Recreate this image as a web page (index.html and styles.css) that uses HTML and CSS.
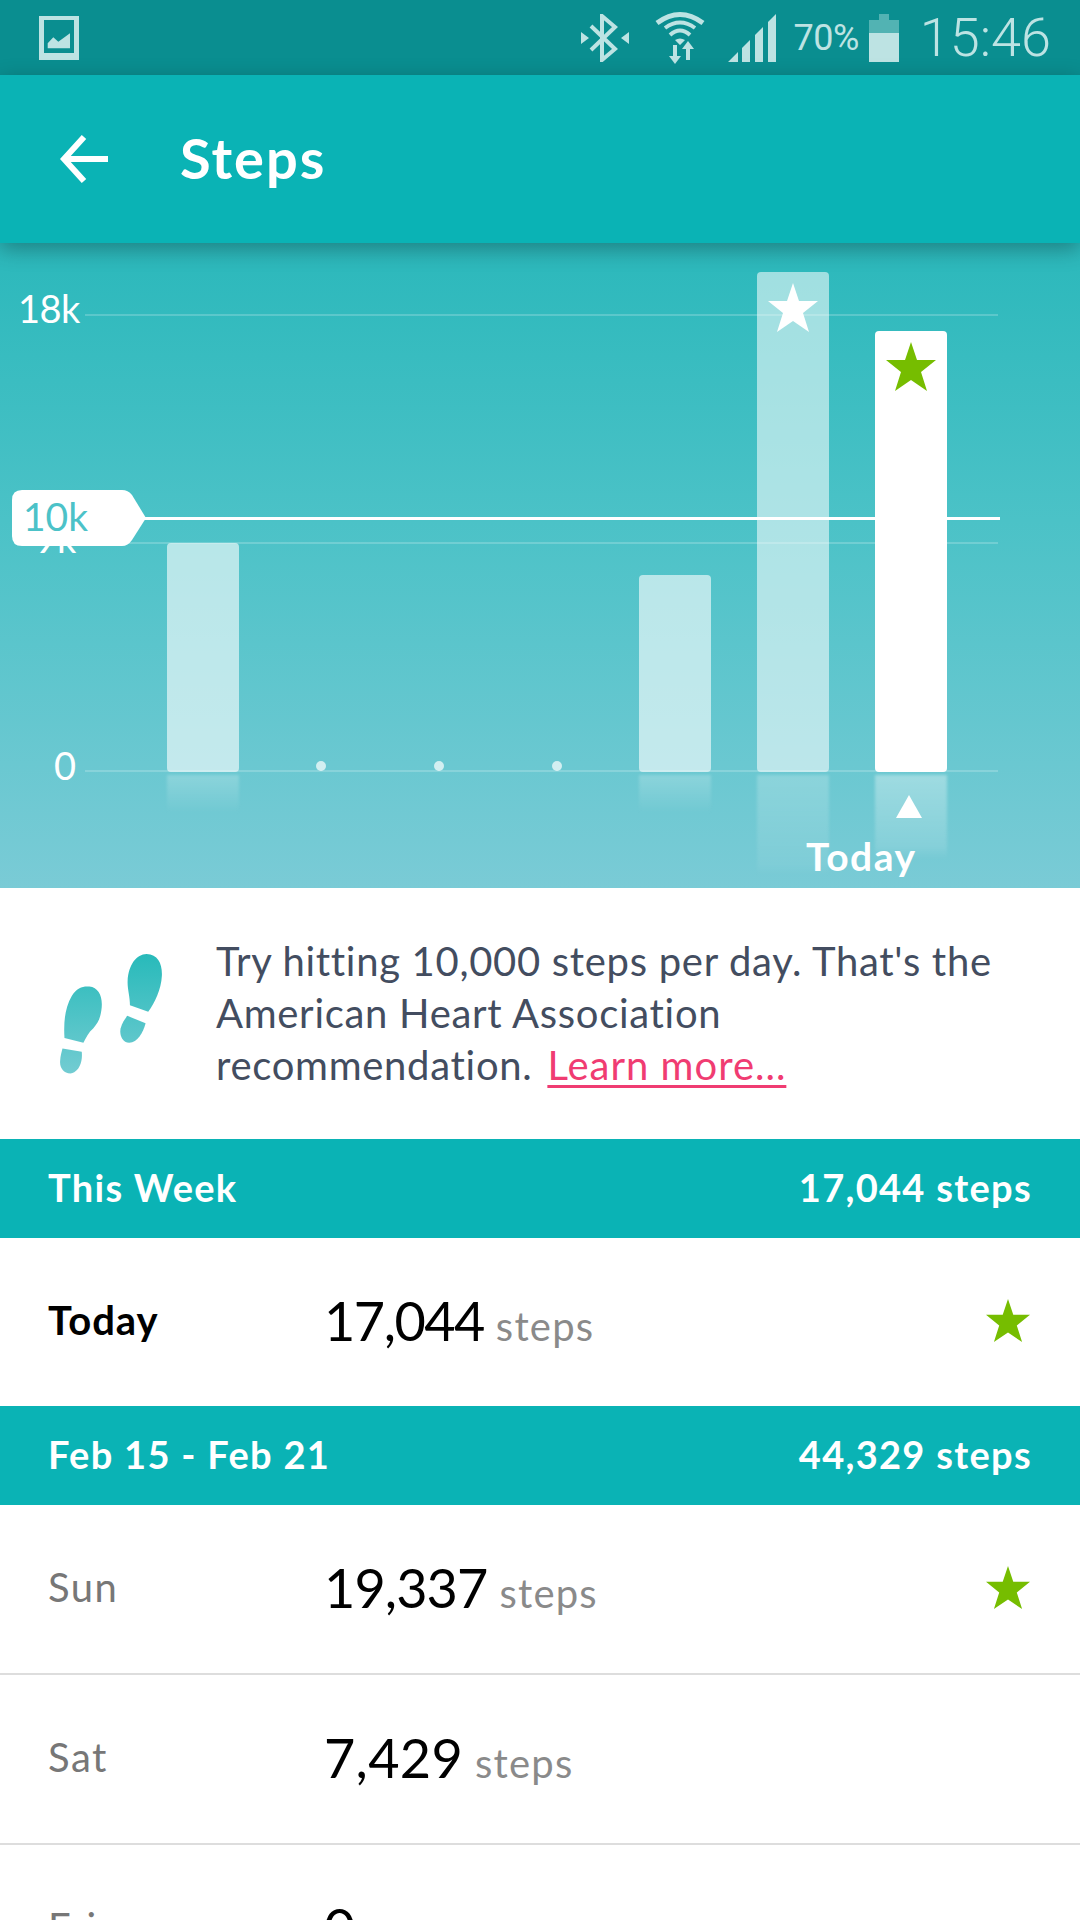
FILE: index.html
```html
<!DOCTYPE html>
<html lang="en">
  <head>
    <meta charset="UTF-8" />
    <meta name="viewport" content="width=device-width, initial-scale=1.0" />
    <title>Steps</title>
    <link rel="stylesheet" href="styles.css">
  </head>
  <body>
    <!-- Status bar -->
    <div class="status-bar">
      <svg class="status-gallery" width="40" height="44" viewBox="0 0 40 44">
        <path fill="#bde3e3" d="M0 0H40V44H0Z"/>
        <path fill="#0a8e90" d="M5 4H35V37H5Z"/>
        <path fill="#bde3e3" d="M8.7 32.3V27.3L14.3 21.3L19.3 25.7L31 17.3V32.3Z"/>
      </svg>
      <div class="status-right">
        <svg class="status-bt" width="48" height="48" viewBox="0 0 48 48">
          <path fill="none" stroke="#bde3e3" stroke-width="4" d="M10 12L34 35L21 46V2L34 13L10 36"/>
          <path fill="#bde3e3" d="M0 18L8 24L0 30ZM48 18L40 24L48 30Z"/>
        </svg>
        <svg class="status-wifi" width="50" height="53" viewBox="0 0 50 53">
          <g fill="none" stroke="#bde3e3">
            <path stroke-width="5" d="M2 12Q25 -5 48 12"/>
            <path stroke-width="4" d="M10 17Q25 6 40 17"/>
            <path stroke-width="4" d="M15 24Q25 15 35 24"/>
          </g>
          <path fill="#bde3e3" d="M20 29Q25 26 30 29L25 34ZM18 34H22V45H26L20 53L14 45H18ZM33 30L39 38H35V49H31V38H27Z"/>
        </svg>
        <svg class="status-signal" width="48" height="48" viewBox="0 0 48 48">
          <path fill="#bde3e3" d="M0 48L10 38V48ZM14 48V34L22 26V48ZM27 48V21L35 13V48ZM40 48V8L48 0V48Z"/>
        </svg>
        <span class="status-pct">70%</span>
        <svg class="status-battery" width="30" height="48" viewBox="0 0 30 48">
          <path fill="#52b3b3" d="M10 0H20V6H30V19H0V6H10Z"/>
          <path fill="#bde3e3" d="M0 19H30V48H0Z"/>
        </svg>
        <span class="status-time">15:46</span>
      </div>
    </div>

    <!-- App bar -->
    <header class="app-bar">
      <svg class="back-icon" width="48" height="48" viewBox="0 0 48 48">
        <path fill="none" stroke="#fff" stroke-width="6" d="M48 24H4M24 2L4 24L24 46"/>
      </svg>
      <h1 class="app-title">Steps</h1>
    </header>

    <!-- Chart -->
    <section class="chart">
      <div class="grid-line grid-18"></div>
      <div class="grid-line grid-9"></div>
      <div class="grid-line grid-0"></div>
      <span class="axis-label label-18">18k</span>
      <span class="axis-label label-9">9k</span>
      <span class="axis-label label-0">0</span>

      <div class="bars">
        <div class="col"><div class="bar bar-low" style="height: 229px"></div></div>
        <div class="col"><div class="dot"></div></div>
        <div class="col"><div class="dot"></div></div>
        <div class="col"><div class="dot"></div></div>
        <div class="col"><div class="bar bar-low" style="height: 197px"></div></div>
        <div class="col">
          <div class="bar bar-high" style="height: 500px">
            <svg class="bar-star" width="50" height="50" viewBox="0 0 50 50"><path fill="#fff" d="M25 0L31 18H50L35 30L41 49L25 38L9 49L15 30L0 18H19Z"/></svg>
          </div>
        </div>
        <div class="col">
          <div class="bar bar-today" style="height: 441px">
            <svg class="bar-star" width="50" height="50" viewBox="0 0 50 50"><path fill="#76bd00" d="M25 0L31 18H50L35 30L41 49L25 38L9 49L15 30L0 18H19Z"/></svg>
          </div>
        </div>
      </div>

      <div class="goal-line"></div>
      <svg class="goal-tag" width="134" height="56" viewBox="0 0 134 56">
        <path fill="#fff" d="M10 0H110Q116 0 120 5L134 28L120 50Q116 56 110 56H10Q0 56 0 46V10Q0 0 10 0Z"/>
      </svg>
      <span class="goal-label">10k</span>

      <div class="today-arrow"></div>
      <span class="today-label">Today</span>
    </section>

    <!-- Tip -->
    <section class="tip">
      <svg class="tip-icon" width="102" height="120" viewBox="90 99 306 361">
        <defs>
          <linearGradient id="foot" gradientUnits="userSpaceOnUse" x1="0" y1="100" x2="0" y2="460">
            <stop offset="0" stop-color="#28baba"/>
            <stop offset="1" stop-color="#73ccd2"/>
          </linearGradient>
        </defs>
        <g fill="url(#foot)">
          <path d="M103 352C100 300 105 260 125 225C140 200 160 195 178 197C205 200 218 225 215 260C212 290 205 305 190 322C175 335 168 350 160 366Z"/>
          <path d="M97 383L155 393C158 420 150 450 125 458C100 460 88 440 90 420C91 405 94 395 97 383Z"/>
          <path d="M300 253C300 225 292 205 293 180C296 130 320 100 350 99C385 100 398 130 396 165C394 205 375 245 355 273Z"/>
          <path d="M292 285L347 307C340 335 322 365 298 366C275 365 268 340 272 322C276 308 284 295 292 285Z"/>
        </g>
      </svg>
      <p class="tip-text">Try hitting 10,000 steps per day. That's the American Heart Association recommendation. <a class="tip-link" href="#">Learn more...</a></p>
    </section>

    <!-- Log -->
    <div class="band"><span>This Week</span><span>17,044 steps</span></div>
    <div class="row">
      <span class="row-day row-day-now">Today</span>
      <span class="row-main"><span class="row-value">17,044</span><span class="row-unit">steps</span></span>
      <svg class="row-star" width="44" height="44" viewBox="0 0 50 50"><path fill="#76bd00" d="M25 0L31 18H50L35 30L41 49L25 38L9 49L15 30L0 18H19Z"/></svg>
    </div>
    <div class="band"><span>Feb 15 - Feb 21</span><span>44,329 steps</span></div>
    <div class="row row-line">
      <span class="row-day">Sun</span>
      <span class="row-main"><span class="row-value row-value-sun">19,337</span><span class="row-unit">steps</span></span>
      <svg class="row-star" width="44" height="44" viewBox="0 0 50 50"><path fill="#76bd00" d="M25 0L31 18H50L35 30L41 49L25 38L9 49L15 30L0 18H19Z"/></svg>
    </div>
    <div class="row row-line">
      <span class="row-day">Sat</span>
      <span class="row-main"><span class="row-value row-value-sat">7,429</span><span class="row-unit">steps</span></span>
    </div>
    <div class="row">
      <span class="row-day">Fri</span>
      <span class="row-main"><span class="row-value">0</span><span class="row-unit">steps</span></span>
    </div>
  </body>
</html>
```

FILE: styles.css
```css
html,
body {
  margin: 0;
  padding: 0;
  height: 1920px;
  overflow: hidden;
}

body {
  font-family: 'Lato', 'Open Sans', sans-serif;
  background-color: #fff;
  color: #000;
}

.status-bar {
  display: flex;
  justify-content: space-between;
  align-items: center;
  height: 75px;
  padding: 0 29px 0 39px;
  background-color: #0a8e90;
  color: #bde3e3;
}

.status-right {
  display: flex;
  align-items: center;
}

.status-bt {
  margin-right: 26px;
}

.status-wifi {
  margin-right: 23px;
}

.status-signal {
  margin-right: 18px;
}

.status-pct {
  font-family: 'Roboto', sans-serif;
  font-size: 36px;
  letter-spacing: -0.5px;
  margin-right: 10px;
}

.status-battery {
  margin-right: 21px;
}

.status-time {
  font-family: 'Roboto', sans-serif;
  font-weight: 300;
  font-size: 54px;
}

.app-bar {
  position: relative;
  z-index: 2;
  display: flex;
  align-items: center;
  height: 168px;
  padding-left: 60px;
  background-color: #0ab3b5;
  box-shadow: 0 6px 20px rgba(0, 0, 0, 0.3);
}

.back-icon {
  margin-right: 72px;
}

.app-title {
  margin: 0 0 4px;
  color: #fff;
  font-size: 56px;
  font-weight: 700;
  letter-spacing: 2px;
}

.chart {
  position: relative;
  height: 645px;
  overflow: hidden;
  background: linear-gradient(#2bb8bb, #4bc2c7 43%, #7acbd6);
}

.grid-line {
  position: absolute;
  left: 85px;
  right: 82px;
  height: 2px;
  background-color: rgba(255, 255, 255, 0.2);
}

.grid-18 { top: 71px; }
.grid-9 { top: 299px; }
.grid-0 { top: 527px; }

.axis-label {
  position: absolute;
  color: #fff;
  font-size: 38px;
  line-height: 44px;
}

.label-18 { left: 18px; top: 43px; letter-spacing: -0.5px; }
.label-9 { left: 35px; top: 273px; }
.label-0 { left: 54px; top: 500px; }

.bars {
  position: absolute;
  left: 167px;
  bottom: 116px;
  display: flex;
  align-items: flex-end;
  gap: 46px;
}

.col {
  display: flex;
  justify-content: center;
  width: 72px;
}

.dot {
  width: 10px;
  height: 10px;
  margin-bottom: 1px;
  border-radius: 50%;
  background-color: rgba(255, 255, 255, 0.7);
}

.bar {
  position: relative;
  width: 100%;
  border-radius: 4px;
}

.bar-low { background-color: rgba(255, 255, 255, 0.6); }
.bar-high { background-color: rgba(255, 255, 255, 0.55); }
.bar-today { background-color: #fff; }

.bar::after {
  content: "";
  position: absolute;
  top: calc(100% + 3px);
  left: 0;
  right: 0;
  height: 38px;
  background: linear-gradient(rgba(255, 255, 255, 0.22), rgba(255, 255, 255, 0));
  filter: blur(1.5px);
}

.bar-high::after {
  height: 100px;
  background: linear-gradient(rgba(255, 255, 255, 0.22), rgba(255, 255, 255, 0.06) 90%, rgba(255, 255, 255, 0));
}

.bar-today::after {
  height: 84px;
  background: linear-gradient(rgba(255, 255, 255, 0.35), rgba(255, 255, 255, 0.12) 85%, rgba(255, 255, 255, 0));
}

.bar-star {
  position: absolute;
  top: 11px;
  left: 11px;
}

.goal-line {
  position: absolute;
  left: 140px;
  right: 80px;
  top: 274px;
  height: 3px;
  background-color: #fff;
}

.goal-tag {
  position: absolute;
  left: 12px;
  top: 247px;
}

.goal-label {
  position: absolute;
  left: 23px;
  top: 251px;
  color: #4cc2c8;
  font-size: 39px;
  line-height: 44px;
}

.today-arrow {
  position: absolute;
  left: 896px;
  top: 552px;
  width: 0;
  height: 0;
  border-left: 13px solid transparent;
  border-right: 13px solid transparent;
  border-bottom: 23px solid #fff;
}

.today-label {
  position: absolute;
  left: 806px;
  top: 590px;
  color: #fff;
  font-size: 39px;
  font-weight: 700;
  letter-spacing: 1.5px;
  line-height: 46px;
}

.tip {
  display: flex;
  align-items: center;
  height: 251px;
  padding-left: 60px;
  box-sizing: border-box;
}

.tip-icon {
  flex: none;
  margin-right: 54px;
}

.tip-text {
  margin: 0 0 2px;
  width: 800px;
  color: #434d60;
  font-size: 40px;
  letter-spacing: 0.7px;
  line-height: 52px;
}

.tip-link {
  margin-left: 4px;
  color: #f03c72;
  letter-spacing: 1px;
  text-decoration-thickness: 3px;
  text-underline-offset: 5px;
}

.band {
  display: flex;
  justify-content: space-between;
  align-items: center;
  height: 96px;
  padding: 0 48px 3px;
  background-color: #0ab3b5;
  color: #fff;
  font-size: 38px;
  font-weight: 700;
  letter-spacing: 1.3px;
}

.row {
  display: flex;
  align-items: center;
  height: 168px;
  padding: 0 48px;
  box-sizing: border-box;
}

.row-line {
  height: 170px;
  border-bottom: 2px solid #ddd;
}

.row-day {
  width: 276px;
  margin-bottom: 4px;
  color: #777;
  font-size: 40px;
  letter-spacing: 1.5px;
}

.row-day-now {
  color: #000;
  font-weight: 700;
  letter-spacing: 1px;
}

.row-main {
  display: flex;
  align-items: baseline;
  margin-bottom: 3px;
}

.row-value {
  font-size: 54px;
  letter-spacing: -1.5px;
}

.row-value-sun {
  letter-spacing: -0.9px;
}

.row-value-sat {
  letter-spacing: 0.3px;
}

.row-unit {
  margin-left: 12px;
  color: #8a8a8a;
  font-size: 40px;
  letter-spacing: 1.2px;
}

.row-star {
  margin-left: auto;
  margin-right: 2px;
  margin-bottom: 3px;
}
```
